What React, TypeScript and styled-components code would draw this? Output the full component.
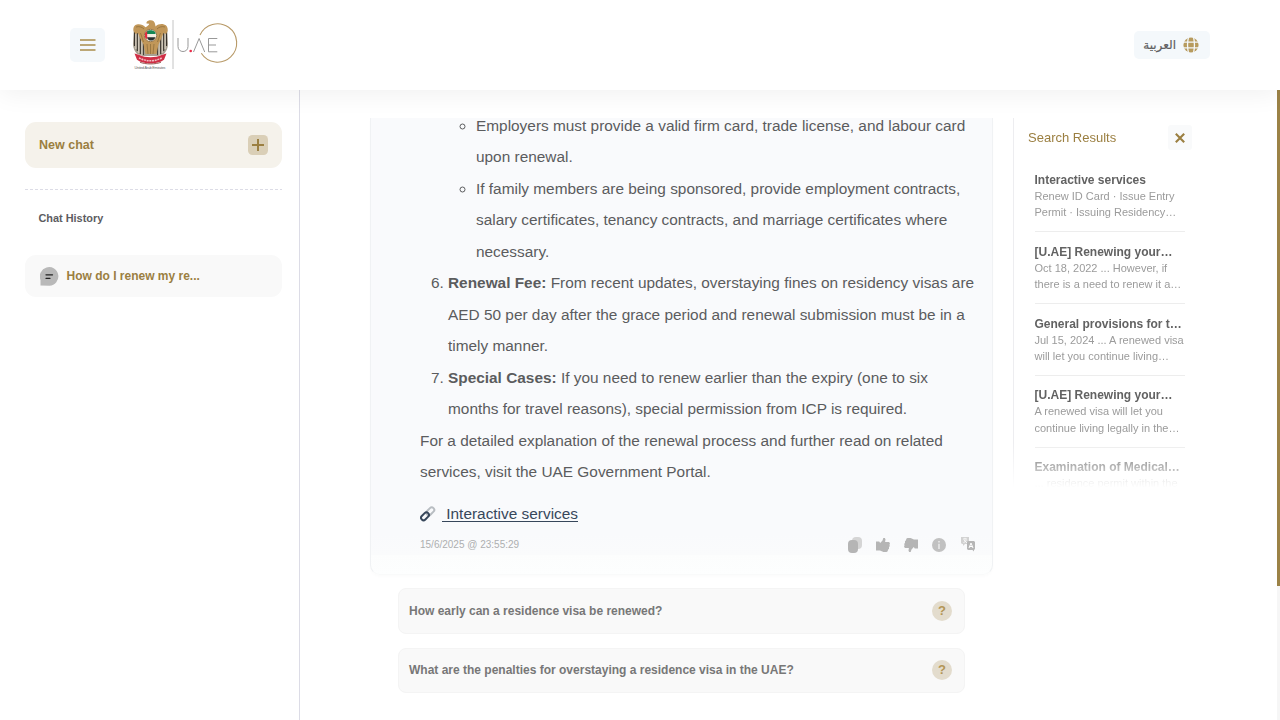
import React from 'react';
import styled, { createGlobalStyle } from 'styled-components';

const gold = '#9b7f41';

const Global = createGlobalStyle`
  * { box-sizing: border-box; }
  body { margin: 0; background: #fff; font-family: "Liberation Sans", Arial, sans-serif; overflow: hidden; }
  button { font: inherit; border: 0; padding: 0; margin: 0; cursor: pointer; }
  svg { display: block; flex: none; }
`;

const Page = styled.div`
  width: 1280px;
  height: 720px;
  display: flex;
  flex-direction: column;
  overflow: hidden;
`;
const Header = styled.header`
  height: 90px;
  flex: none;
  display: flex;
  align-items: center;
  padding: 0 70px;
  background: #fff;
  box-shadow: 0 4px 24px rgba(0, 0, 0, 0.06);
  position: relative;
  z-index: 2;
`;
const MenuButton = styled.button`
  width: 35px;
  height: 34px;
  border-radius: 5px;
  background: #f4f8fb;
  display: flex;
  align-items: center;
  justify-content: center;
`;
const Brand = styled.div`
  margin-left: 25px;
  flex: 1;
`;
const Language = styled.button`
  width: 76px;
  height: 28px;
  border-radius: 5px;
  background: #f4f8fb;
  display: flex;
  align-items: center;
  justify-content: flex-end;
  gap: 7px;
  padding-right: 11px;
  color: #5f5f61;
  font-family: "DejaVu Sans", sans-serif;
  font-size: 12px;
  -webkit-text-stroke: 0.2px #5f5f61;
`;
const Body = styled.div`
  flex: 1;
  min-height: 0;
  display: flex;
`;
const Sidebar = styled.aside`
  width: 300px;
  border-right: 1px solid #dcdce6;
  padding: 32px 17px 0 25px;
`;
const NewChat = styled.button`
  width: 257px;
  height: 46px;
  border-radius: 11px;
  background: #f5f2eb;
  display: flex;
  align-items: center;
  justify-content: space-between;
  padding: 0 14px;
  color: ${gold};
  font-size: 12.5px;
  font-weight: 700;
`;
const Dashes = styled.div`
  height: 1px;
  margin-top: 21px;
  background: repeating-linear-gradient(90deg, #dcdce6 0 3px, transparent 3px 5px);
`;
const HistoryTitle = styled.h2`
  margin: 21px 0 0 13.5px;
  font-size: 10.9px;
  line-height: 14px;
  color: #5c5c61;
`;
const HistoryItem = styled.div`
  margin-top: 30px;
  height: 42px;
  border-radius: 11px;
  background: #f9f9f9;
  display: flex;
  align-items: center;
  gap: 7.5px;
  padding-left: 15px;
  color: ${gold};
  font-size: 12px;
  font-weight: 700;
`;
const Main = styled.main`
  width: 623px;
  margin: 28px 0 0 70px;
`;
const Card = styled.section`
  height: 457px;
  overflow: hidden;
  border: 1px solid #f0f2f4;
  border-top: 0;
  border-bottom-color: #f9fafa;
  border-radius: 0 0 10px 10px;
  background: linear-gradient(#f9fafc 0 415px, #fafbfc 437px, #fcfdfd 437px, #fdfefe);
  box-shadow: 0 2px 3px rgba(0, 0, 0, 0.015);
  padding: 0 16px 0 49px;
`;
const Answer = styled.div`
  margin-top: -8.5px;
  color: #5b5c5e;
  font-size: 15.4px;
  line-height: 31.5px;
  white-space: nowrap;
  ol, ul { margin: 0; padding-left: 28px; }
  ul { list-style: circle; }
  p { margin: 0; }
`;
const Continued = styled.li`
  list-style: none;
`;
const SourceLink = styled.div`
  display: flex;
  align-items: center;
  gap: 6px;
  margin-top: 16px;
  height: 20px;
  color: #37475b;
  font-size: 15.4px;
  span { text-decoration: underline; text-underline-offset: 2px; text-decoration-thickness: 1px; white-space: pre; }
`;
const CardFoot = styled.div`
  display: flex;
  align-items: center;
  justify-content: space-between;
  margin-top: 11px;
  height: 20px;
  color: #adafb0;
  font-size: 10px;
`;
const Actions = styled.div`
  display: flex;
  gap: 12px;
`;
const Questions = styled.div`
  display: flex;
  flex-direction: column;
  gap: 14px;
  padding: 13px 28px 0;
`;
const Question = styled.button`
  height: 45.5px;
  border: 1px solid #f4f4f4;
  border-radius: 8px;
  background: #f9f9f9;
  display: flex;
  align-items: center;
  justify-content: space-between;
  padding: 0 12px 0 10px;
  color: #777;
  font-size: 12px;
  font-weight: 700;
  white-space: nowrap;
`;
const Mark = styled.span`
  width: 20px;
  height: 20px;
  border-radius: 50%;
  background: #e3dccd;
  color: #b39655;
  font-size: 13px;
  line-height: 20px;
  text-align: center;
`;
const Results = styled.aside`
  width: 180px;
  height: 370px;
  margin: 28px 0 0 20px;
  overflow: hidden;
  border-left: 1px solid #ededf0;
  padding: 7px 1px 0 14px;
  mask-image: linear-gradient(#000 0 325px, transparent 370px);
`;
const ResultsHead = styled.div`
  display: flex;
  align-items: center;
  justify-content: space-between;
  color: ${gold};
  font-size: 13px;
`;
const Close = styled.button`
  width: 24px;
  height: 25px;
  border-radius: 3px;
  background: #f9fafb;
  display: grid;
  place-items: center;
`;
const ResultList = styled.div`
  padding: 10.6px 7.5px 0 6.5px;
`;
const Result = styled.article`
  height: 71.8px;
  padding-top: 11.4px;
  border-bottom: 1px solid #ededed;
  white-space: nowrap;
`;
const ResultTitle = styled.h3`
  margin: 0;
  font-size: 12px;
  line-height: 16px;
  color: #626262;
`;
const ResultText = styled.p`
  margin: 0;
  font-size: 11px;
  line-height: 16.5px;
  color: #9b9b9b;
`;
const Track = styled.div`
  width: 3px;
  margin-left: auto;
  background: #f6f6f6;
`;
const Thumb = styled.div`
  height: 496px;
  background: #9b8246;
`;

const Emblem = () => (
  <svg width="110" height="52" viewBox="0 0 110 52">
    <path d="M4 9L3 25c0 4 1.500 7 4 10l6 2h15l6-2c2.500-3 4-6 4-10L37 9l-5 3H9z" fill="#a8a092" />
    <path d="M4.500 12v15M7.300 14v18M10.300 17v18M13.300 21v15M27.700 21v15M30.700 17v18M33.700 14v18M36.500 12v15" stroke="#37322b" strokeWidth="1.100" />
    <path d="M5.900 13v17M8.800 15v19M12 19v17M29 19v17M32.200 15v19M35.100 13v17" stroke="#e6dfd0" strokeWidth=".9" />
    <path d="M16.500 3.200c.8-1.400 2.500-2 4.200-2 2.500 0 4 1.600 4.300 3.600l.6 2.600c2-2 5.400-2.800 8.400-2 3 .8 4 3 3.700 6.600l-1.700 3-2.500-1-2 5-3 6.500-2 9.500h-11l-2-9.500L10 19l-2-5-2.500 1-2-3C3 8.500 4 6 7 5.400c3.500-.6 6.500.8 8.500 2.800 2-1 3.500-2 3.700-3.400l-2.700-.3z" fill="#c19759" />
    <path d="M6 8c3-1 6 0 8 2M35 8c-3-1-6 0-8 2M10.500 14l3 9M30.500 14l-3 9M17 25l1 10M20.500 25v10M24 25l-1 10" fill="none" stroke="#8a6a38" strokeWidth=".7" />
    <circle cx="20.500" cy="16.500" r="6.200" fill="#f3eee3" stroke="#8f7047" strokeWidth=".9" />
    <path d="M16.500 12.700c2-2 6.500-2 8.500.3l.6 2h-9z" fill="#158754" />
    <path d="M17 18.200h8.500c-1.500 4-6 4.300-8 1.500z" fill="#29302f" />
    <path d="M15 14l2.200-2v8.500L15 18.500z" fill="#e22d3f" />
    <path d="M4.500 34.500l5 1.500c6 3 16 3 22 0l5-1.500-2.500 6.200c-7 5-20 5-27 0z" fill="#cf2e45" />
    <path d="M9 38.800c7 4 16 4 23 0" fill="none" stroke="#f0bcc2" strokeWidth="1.500" strokeDasharray="2 .7" />
    <path d="M10 43.200c5 2.300 16 2.300 21 0" fill="none" stroke="#8b4a43" strokeWidth=".9" />
    <text x="4.500" y="49.800" fontSize="3.800" textLength="31" fill="#666">United Arab Emirates</text>
    <path d="M43 1v49" stroke="#c4c4c4" strokeWidth="1" />
    <path d="M70 16A19.200 19.200 0 1 1 71.300 34.300" fill="none" stroke="#b89a68" strokeWidth="1.100" />
    <path d="M48 19v8.500c0 6.700 10 6.700 10 0V19M63.500 33l5.600-13.500L74.700 33M87.300 19.500h-8.800v13.300h8.800M78.500 26H86" fill="none" stroke="#999" strokeWidth="1" />
    <circle cx="60.700" cy="32" r="1.300" fill="#e92d4a" />
  </svg>
);

const Globe = () => (
  <svg width="16" height="16" viewBox="0 0 16 16">
    <circle cx="8" cy="8" r="7.600" fill="#b79b5e" />
    <path d="M0 5.200h16M0 10.800h16M5.500 0c-1.200 5-1.200 11 0 16M10.500 0c1.200 5 1.200 11 0 16" fill="none" stroke="#f4f8fb" strokeWidth="1.300" />
  </svg>
);

const ThumbShape = ({ down = false }: { down?: boolean }) => (
  <svg width="16" height="16" viewBox="0 0 16 16">
    <g transform={down ? 'rotate(180 8 8)' : undefined}>
      <path d="M1 4.500h3.200l1 1.500L7.500 3.500 8.300 1h1.500l.7 1.200-.4 2.800h3.700l1.200 1-.5 1.800.3 1.200-.8 1.200v1.600l-1 1-.3 1.400-1.200.8H8.500L5 13.500H1z" fill="#b5b5b5" />
    </g>
  </svg>
);

const results = [
  { title: 'Interactive services', a: 'Renew ID Card · Issue Entry', b: 'Permit · Issuing Residency…' },
  { title: '[U.AE] Renewing your…', a: 'Oct 18, 2022 ... However, if', b: 'there is a need to renew it a…' },
  { title: 'General provisions for t…', a: 'Jul 15, 2024 ... A renewed visa', b: 'will let you continue living…' },
  { title: '[U.AE] Renewing your…', a: 'A renewed visa will let you', b: 'continue living legally in the…' },
  { title: 'Examination of Medical…', a: '... residence permit within the', b: '' },
];

export default function App() {
  return (
    <Page>
      <Global />
      <Header>
        <MenuButton aria-label="Menu">
          <svg width="16" height="12" viewBox="0 0 16 12">
            <path d="M0 1h15.500M0 6h15.500M0 11h15.500" stroke="#a98c4b" strokeWidth="1.400" />
          </svg>
        </MenuButton>
        <Brand><Emblem /></Brand>
        <Language><span>العربية</span><Globe /></Language>
      </Header>
      <Body>
        <Sidebar>
          <NewChat>
            New chat
            <svg width="20" height="20" viewBox="0 0 20 20">
              <rect width="20" height="20" rx="4.500" fill="#dacfb7" />
              <path d="M10 4v12M4 10h12" stroke="#9b7f41" strokeWidth="2" />
            </svg>
          </NewChat>
          <Dashes />
          <HistoryTitle>Chat History</HistoryTitle>
          <HistoryItem>
            <svg width="19" height="19" viewBox="0 0 19 19">
              <path d="M.5 18.500v-5.500A9.300 9.300 0 1 1 9.500 18.700z" fill="#b9b9b9" />
              <path d="M6 7.800h6.500M6 11.300h4" stroke="#222" strokeWidth="1.300" strokeLinecap="round" />
            </svg>
            How do I renew my re...
          </HistoryItem>
        </Sidebar>
        <Main>
          <Card>
            <Answer>
              <ol start={5}>
                <Continued>
                  <ul>
                    <li>Employers must provide a valid firm card, trade license, and labour card<br />upon renewal.</li>
                    <li>If family members are being sponsored, provide employment contracts,<br />salary certificates, tenancy contracts, and marriage certificates where<br />necessary.</li>
                  </ul>
                </Continued>
                <li><b>Renewal Fee:</b> From recent updates, overstaying fines on residency visas are<br />AED 50 per day after the grace period and renewal submission must be in a<br />timely manner.</li>
                <li><b>Special Cases:</b> If you need to renew earlier than the expiry (one to six<br />months for travel reasons), special permission from ICP is required.</li>
              </ol>
              <p>For a detailed explanation of the renewal process and further read on related<br />services, visit the UAE Government Portal.</p>
            </Answer>
            <SourceLink>
              <svg width="16" height="16" viewBox="0 0 16 16" fill="none" strokeWidth="2">
                <rect x="5.800" y="2.800" width="9" height="5" rx="2.500" transform="rotate(-45 10.300 5.300)" stroke="#b8bdc2" />
                <rect x=".5" y="7.800" width="9" height="5" rx="2.500" transform="rotate(-45 5 10.300)" stroke="#37475b" />
              </svg>
              <span> Interactive services</span>
            </SourceLink>
            <CardFoot>
              <span>15/6/2025 @ 23:55:29</span>
              <Actions>
                <svg width="16" height="16" viewBox="0 0 16 16">
                  <rect x="5" y="0" width="10" height="12" rx="4" fill="#d5d5d5" />
                  <rect x="1" y="3" width="10" height="13" rx="4" fill="#b5b5b5" />
                </svg>
                <ThumbShape />
                <ThumbShape down />
                <svg width="16" height="16" viewBox="0 0 16 16">
                  <circle cx="8" cy="8" r="7" fill="#c1c1c1" />
                  <path d="M8 4v1.500M8 6.800V12" stroke="#eee" strokeWidth="1.400" />
                </svg>
                <svg width="17" height="16" viewBox="0 0 17 16">
                  <path d="M3-1h6l1 1v7H6L4 9V7H3L2 6V0z" fill="#d2d2d2" />
                  <path d="M4 2h4M6 .8V2M5 3l3 3M7.500 3l-3 3" stroke="#fff" strokeWidth=".8" />
                  <path d="M9 4h6l1 1v7l-1 1v1.500L13.500 13H9l-1-1V5z" fill="#b6b6b6" />
                  <path d="M10 11l2-5 2 5M10.700 9.500h2.600" fill="none" stroke="#fff" strokeWidth="1" />
                </svg>
              </Actions>
            </CardFoot>
          </Card>
          <Questions>
            <Question>How early can a residence visa be renewed?<Mark>?</Mark></Question>
            <Question>What are the penalties for overstaying a residence visa in the UAE?<Mark>?</Mark></Question>
          </Questions>
        </Main>
        <Results>
          <ResultsHead>
            Search Results
            <Close aria-label="Close">
              <svg width="10" height="10" viewBox="0 0 10 10"><path d="M.8.8l8.400 8.400M9.200.8L.8 9.200" stroke="#9b7f41" strokeWidth="2.100" /></svg>
            </Close>
          </ResultsHead>
          <ResultList>
            {results.map((r, i) => (
              <Result key={i}>
                <ResultTitle>{r.title}</ResultTitle>
                <ResultText>{r.a}<br />{r.b}</ResultText>
              </Result>
            ))}
          </ResultList>
        </Results>
        <Track><Thumb /></Track>
      </Body>
    </Page>
  );
}
